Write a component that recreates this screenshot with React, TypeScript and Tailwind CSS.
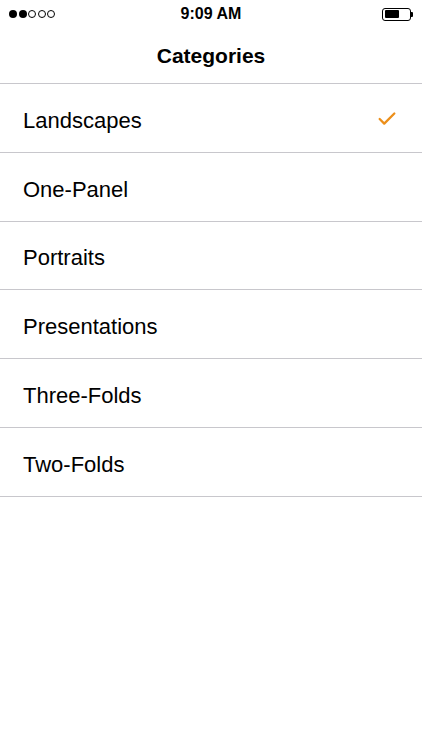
import { Check } from "lucide-react";

const categories = [
  "Landscapes",
  "One-Panel",
  "Portraits",
  "Presentations",
  "Three-Folds",
  "Two-Folds",
];

export default function App() {
  const selected = "Landscapes";

  return (
    <div
      className="w-[422px] h-[750px] bg-white text-black"
      style={{ fontFamily: '"Liberation Sans", Arial, sans-serif' }}
    >
      {/* Status bar */}
      <div className="h-[28px] flex items-center justify-between px-[9px] relative">
        <div className="flex items-center gap-[1.5px]">
          <span className="w-[8px] h-[8px] rounded-full bg-black" />
          <span className="w-[8px] h-[8px] rounded-full bg-black" />
          <span className="w-[8px] h-[8px] rounded-full border border-black" />
          <span className="w-[8px] h-[8px] rounded-full border border-black" />
          <span className="w-[8px] h-[8px] rounded-full border border-black" />
        </div>
        <div className="absolute left-0 right-0 text-center text-[16px] font-bold pointer-events-none">
          9:09 AM
        </div>
        <div className="flex items-center">
          <div className="w-[29px] h-[13px] border border-black rounded-[3px] p-[1.5px]">
            <div className="h-full w-[14px] bg-black rounded-[1px]" />
          </div>
          <div className="w-[2px] h-[5px] bg-black rounded-r-[1px]" />
        </div>
      </div>

      {/* Navigation bar */}
      <div className="h-[56px] flex items-center justify-center border-b border-[#c8c7cc]">
        <span className="text-[21px] font-bold">Categories</span>
      </div>

      {/* List */}
      <div>
        {categories.map((c) => (
          <div
            key={c}
            className="h-[68.8px] flex items-center justify-between pl-[23px] pr-[24px] border-b border-[#c8c7cc]"
          >
            <span className="text-[22px] pt-[5px]">{c}</span>
            {c === selected && (
              <Check className="w-[22px] h-[22px] text-[#ec8f1a] mt-[2px]" strokeWidth={2.5} />
            )}
          </div>
        ))}
      </div>
    </div>
  );
}
